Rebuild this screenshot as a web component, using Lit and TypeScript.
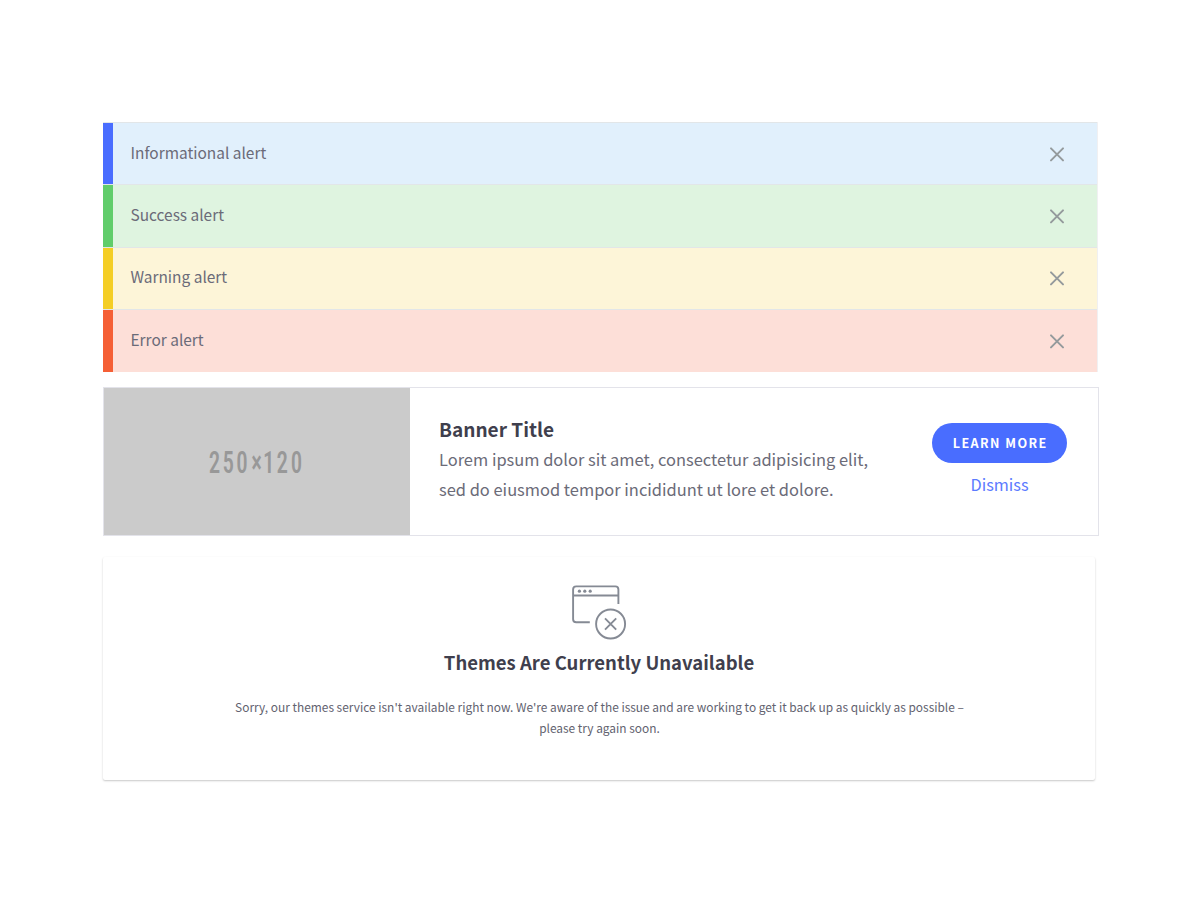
import { LitElement, html, css } from "lit";
import { customElement, state } from "lit/decorators.js";

type Alert = { kind: string; text: string };

@customElement("app-root")
export class AppRoot extends LitElement {
  @state() alerts: Alert[] = [
    { kind: "info", text: "Informational alert" },
    { kind: "success", text: "Success alert" },
    { kind: "warning", text: "Warning alert" },
    { kind: "error", text: "Error alert" },
  ];

  static styles = css`
    :host {
      display: block;
      box-sizing: border-box;
      height: 900px;
      padding: 122px 101px 0 103px;
      background: #fff;
      color: #6b6b78;
      font-family: "Noto Sans CJK SC", "Source Sans Pro", sans-serif;
    }
    * { box-sizing: border-box; }
    .alerts {
      width: 995px;
      border-right: 1px solid #f0f0f2;
    }
    .alert {
      display: flex;
      align-items: center;
      height: 62.4px;
      padding-right: 32px;
      border-top: 1px solid #e2e6e8;
      font-size: 15.45px;
      line-height: 24px;
    }
    .bar { width: 10px; align-self: stretch; margin-right: 17.5px; }
    .label { flex: 1; padding-bottom: 4.2px; }
    .info { background: #e1f0fc; }
    .info .bar { background: #496dff; }
    .success { background: #dff4e0; }
    .success .bar { background: #61cd6b; }
    .warning { background: #fdf5d8; }
    .warning .bar { background: #f4ce25; }
    .error { background: #fddfd8; }
    .error .bar { background: #f55f35; }
    .close {
      display: block;
      width: 16px;
      height: 16px;
      padding: 0;
      border: 0;
      background: none;
    }
    .close svg, .thumb svg, .icon { display: block; }
    .banner {
      display: flex;
      width: 996px;
      height: 149px;
      margin-top: 15.4px;
      border: 1px solid #e3e3ea;
      background: #fff;
    }
    .thumb { width: 306px; background: #cbcbcb; }
    .copy { flex: 1; padding: 25px 0 0 29px; }
    .banner-title {
      margin: 0;
      font-size: 19.05px;
      line-height: 32.5px;
      font-weight: 700;
      color: #3f3f4d;
    }
    .copy p {
      margin: 0;
      width: 445px;
      font-size: 16.44px;
      line-height: 29.3px;
    }
    .actions {
      display: flex;
      flex-direction: column;
      align-items: center;
      width: 135px;
      margin: 35px 31px 0 0;
    }
    .primary {
      width: 135px;
      height: 40px;
      padding: 0 0 0 1.4px;
      border: 0;
      border-radius: 20px;
      background: #496dff;
      color: #fff;
      font: 700 12.6px/38px "Noto Sans CJK SC", sans-serif;
      letter-spacing: 1.42px;
    }
    .dismiss {
      margin-top: 9px;
      color: #5c7bff;
      font-size: 16.3px;
      line-height: 24px;
    }
    .card {
      display: flex;
      flex-direction: column;
      align-items: center;
      width: 992px;
      height: 223px;
      margin-top: 21px;
      padding-top: 27px;
      background: #fff;
      border-radius: 2px;
      box-shadow: 0 1px 2px rgba(0, 0, 0, 0.22);
      text-align: center;
    }
    .card-title {
      margin: 8px 0 0;
      font-size: 18.52px;
      line-height: 28px;
      font-weight: 700;
      color: #3f3f4d;
    }
    .card p {
      width: 745px;
      margin: 20.8px 0 0 1px;
      font-size: 11.91px;
      line-height: 20.8px;
      color: #62626f;
    }
  `;

  private dismiss(alert: Alert) {
    this.alerts = this.alerts.filter((a) => a !== alert);
  }

  render() {
    return html`
      <div class="alerts">
        ${this.alerts.map(
          (a) => html`<div class="alert ${a.kind}">
            <span class="bar"></span>
            <span class="label">${a.text}</span>
            <button class="close" aria-label="Close" @click=${() => this.dismiss(a)}>
              <svg width="16" height="16" viewBox="0 0 16 16">
                <path d="M2 2.4L14 14.4M14 2.4L2 14.4" stroke="#949a9c" stroke-width="2" stroke-linecap="round" />
              </svg>
            </button>
          </div>`
        )}
      </div>

      <section class="banner">
        <div class="thumb">
          <svg width="306" height="147" viewBox="0 0 306 147">
            <text transform="scale(.75 1)" x="147.2 165.7 184 203.5 219.5 237.7 256.7" y="84.7"
              text-anchor="middle" font-family="Roboto Condensed, Roboto, sans-serif"
              font-stretch="75%" font-weight="500" font-size="30.5" fill="#989898">250×120</text>
          </svg>
        </div>
        <div class="copy">
          <h2 class="banner-title">Banner Title</h2>
          <p>Lorem ipsum dolor sit amet, consectetur adipisicing elit, sed do eiusmod tempor incididunt ut lore et dolore.</p>
        </div>
        <div class="actions">
          <button class="primary">LEARN MORE</button>
          <a class="dismiss">Dismiss</a>
        </div>
      </section>

      <section class="card">
        <svg class="icon" width="58" height="56" viewBox="570 584 58 56" fill="none" stroke="#858a94" stroke-width="1.9">
          <path d="M618.4 604V589.5Q618.4 586.4 615.3 586.4H576.2Q573.1 586.4 573.1 589.5V619.2Q573.1 622.3 576.2 622.3H589.8M573.1 595.5H618.4" />
          <circle cx="610.6" cy="624" r="14.5" />
          <path d="M605 618.4L616.2 629.6M616.2 618.4L605 629.6" />
          <g fill="#858a94" stroke="none">
            <circle cx="579.4" cy="591.2" r="1.6" />
            <circle cx="584.8" cy="591.2" r="1.6" />
            <circle cx="590.2" cy="591.2" r="1.6" />
          </g>
        </svg>
        <h2 class="card-title">Themes Are Currently Unavailable</h2>
        <p>Sorry, our themes service isn't available right now. We're aware of the issue and are working to get it back up as quickly as possible – please try again soon.</p>
      </section>
    `;
  }
}
